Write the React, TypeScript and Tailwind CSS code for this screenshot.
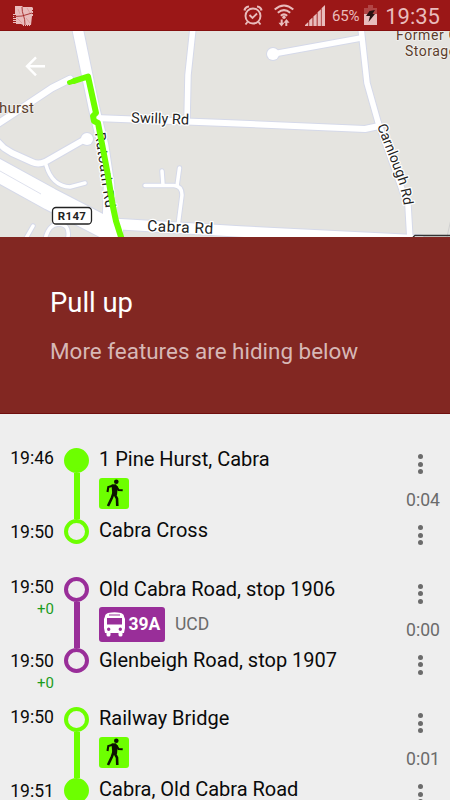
interface Stop {
  time: string
  name: string
  delay?: string
  filled?: boolean
}

interface Leg {
  mode: "walk" | "bus"
  from: Stop
  to: Stop
  duration: string
  route?: string
  headsign?: string
}

const legs: Leg[] = [
  {
    mode: "walk",
    from: { time: "19:46", name: "1 Pine Hurst, Cabra", filled: true },
    to: { time: "19:50", name: "Cabra Cross" },
    duration: "0:04",
  },
  {
    mode: "bus",
    from: { time: "19:50", name: "Old Cabra Road, stop 1906", delay: "+0" },
    to: { time: "19:50", name: "Glenbeigh Road, stop 1907", delay: "+0" },
    duration: "0:00",
    route: "39A",
    headsign: "UCD",
  },
  {
    mode: "walk",
    from: { time: "19:50", name: "Railway Bridge" },
    to: { time: "19:51", name: "Cabra, Old Cabra Road", filled: true },
    duration: "0:01",
  },
]

const roads = [
  { d: "M70 79 L52 88 L28 104 L-4 125", w: 6.5 },
  { d: "M193 28 L188 75 L187 120", w: 5.5 },
  { d: "M95 118 L225 123 L365 129 L379 126", w: 6 },
  { d: "M361 28 L367 83 L378 122 L404 195 L408 205 L410 240", w: 5.5 },
  { d: "M273 54 L361 38", w: 5.5 },
  { d: "M-4 140 L4 148 L12 153 L32 162 Q38 165 45 162 L87 138", w: 6 },
  { d: "M46 165 Q52 186 70 187 L85 183", w: 3.5 },
  { d: "M145 185.5 H174 Q182 186 182 195 L178 226", w: 3.5 },
  { d: "M162 171 L163 185 M179.500 168 L177 186", w: 3.5 },
  { d: "M25 240 L33 226 M45 240 Q48 225 58 224 Q70 224 68 237", w: 3.5 },
  { d: "M77 26 L94 108 L103 145 L109 185 L108 222", w: 10.5 },
  { d: "M-10 166 L50 199 L100 223 L240 231.500 L420 240.500", w: 10.5 },
  { d: "M-10 166 L50 199 L112 231", w: 22 },
]

function StatusBar() {
  return (
    <header className="flex h-[31px] shrink-0 items-center border-b border-[#85100f] bg-[#9b1717] pr-[10px] pl-[12px] text-[#e9bcbc]">
      <svg className="mt-px" width="22" height="22" viewBox="0 0 22 22" fill="none">
        <path
          d="M3 1h7l1 1h9l1 1v2h-1v1h1v2h-1v1h1v2h-1l-1 9h-1v1h-1v-1h-1v1h-1v-1h-1v1h-1v-1h-1v1h-1v-1l-2-1H4v-1H1v-1h3v-1H1v-1h3v-1H1v-1h3v-1H1v-1h3v-1H1v-1h2z"
          fill="#e9bcbc"
        />
        <path d="M2 11.500L10 11l10-3M10 2q0 5 1.500 8.500T13 20" stroke="#9b1717" strokeWidth=".8" />
        <path d="M15 3l3 5M6 4l2 5M14 13l4 5M5 13l5 5" stroke="#cf8585" strokeWidth=".5" />
      </svg>
      <div className="flex-1" />
      <svg className="mr-[11px]" width="20" height="22" viewBox="0 0 20 22" fill="none" stroke="currentColor" strokeWidth="1.9">
        <circle cx="10" cy="12" r="7.500" />
        <path d="M6.500 11l3 3 4.500-4.500M4.500 18l-2 2.500M15.500 18l2 2.500" />
        <path d="M1.500 6.500Q2 3 6 2.500M18.500 6.500Q18 3 14 2.500" strokeWidth="2.200" />
      </svg>
      <svg className="mr-[11px]" width="20" height="23" viewBox="0 0 20 23" fill="none" stroke="currentColor" strokeWidth="2">
        <path d="M.7 5.500Q10-2.500 19.300 5.500M3.800 8.700Q10 3.500 16.200 8.700M6.800 11.700Q10 9 13.200 11.700" />
        <circle cx="10" cy="13.300" r="1.700" fill="currentColor" stroke="none" />
        <path d="M7.700 15.500v5M12.300 22v-5" />
        <path d="M4.500 18.800h6l-3 3.700zM9.500 18.800h6l-3-3.800z" fill="currentColor" stroke="none" />
      </svg>
      <svg className="mr-[7px]" width="20" height="21" viewBox="0 0 20 21" fill="currentColor">
        <path d="M0 21v-1l3.300-3v4zM4.200 21v-5.500l3.300-3V21zM8.400 21v-9.500l3.300-3V21zM12.600 21V7.200l3.300-3V21zM16.600 21V3.300L20 0v21z" />
      </svg>
      <span className="mt-[2px] text-[15px] tracking-[-0.2px]">65%</span>
      <svg className="mr-[8.5px] ml-[4.5px]" width="13" height="20" viewBox="0 0 13 20">
        <path d="M4 0h5v3h4v6H0V3h4z" fill="#b24545" />
        <path d="M0 9h13v11H0z" fill="currentColor" />
        <path d="M5.500 6l5.500-1-2.500 4h2.500l-6.500 8 1.500-6H2z" fill="#271010" />
      </svg>
      <span className="mt-[3px] text-[22px] leading-none">19:35</span>
    </header>
  )
}

function RouteMap() {
  return (
    <div className="h-[206px] shrink-0 overflow-hidden bg-[#e5e4e0]">
      <svg className="block" width="450" height="206" viewBox="0 31 450 206" fill="none">
        <g stroke="#d5d9e9" strokeLinejoin="round" strokeLinecap="round">
          {roads.map((road) => (
            <path key={road.d} d={road.d} strokeWidth={road.w + 2} />
          ))}
          <circle cx="273" cy="54" r="6" strokeWidth="2" />
          <circle cx="87" cy="139" r="6" strokeWidth="2" />
        </g>
        <g stroke="#fff" strokeLinejoin="round" strokeLinecap="round">
          {roads.map((road) => (
            <path key={road.d} d={road.d} strokeWidth={road.w} />
          ))}
        </g>
        <circle cx="273" cy="54" r="6" fill="#fff" />
        <circle cx="87" cy="139" r="6" fill="#fff" />
        <path d="M0 171L41 194" stroke="#d5d9e9" strokeWidth=".8" />
        <path d="M447 237l4-18" stroke="#d0d0d0" />

        <g fontFamily="Roboto, sans-serif" fontSize="14.500" fill="#222" stroke="#fff" strokeWidth="2.500" paintOrder="stroke" strokeLinejoin="round">
          <text transform="translate(131 122.500) rotate(2)" textLength="58">Swilly Rd</text>
          <text transform="translate(147 231) rotate(2.500)" textLength="66" fontSize="15.500">Cabra Rd</text>
          <path id="carnlough" d="M377 126 Q386 149 395 172 Q403 193 404.500 213" stroke="none" fill="none" />
          <text fontSize="14">
            <textPath href="#carnlough" textLength="84">Carnlough Rd</textPath>
          </text>
          <text transform="translate(95 133) rotate(82)" textLength="76">Ratoath Rd</text>
        </g>
        <g fontFamily="Roboto, sans-serif" fontSize="14" fill="#5b3d2c" stroke="#f3f2ef" strokeWidth="1.500" paintOrder="stroke">
          <text x="-1" y="112.500" textLength="35" fontSize="15">hurst</text>
          <text x="396" y="39.500" letterSpacing=".6">Former C</text>
          <text x="405" y="55.500" letterSpacing=".5">Storage</text>
        </g>

        <rect x="52.500" y="207.500" width="39" height="16.500" rx="3.500" fill="#fff" stroke="#222" strokeWidth="1.300" />
        <text x="72" y="220" fontFamily="Roboto, sans-serif" fontSize="11.500" fontWeight="700" letterSpacing=".3" textAnchor="middle" fill="#222">
          R147
        </text>
        <path d="M413 237l2-1.500h36" stroke="#333" strokeWidth="1.500" />

        <path
          d="M74 81 L88 76.500 L96 113 L93 116 L94 121 L98 123 L107 170 L113 207 L116 221 L122 240"
          stroke="#6dff00"
          strokeWidth="6"
          strokeLinecap="round"
          strokeLinejoin="round"
        />
        <path d="M69.500 82.500L76 80.300" stroke="#6dff00" strokeWidth="5" strokeLinecap="round" />
        <path d="M45 66.300H27M36 57.300L27 66.300l9 9" stroke="#fff" strokeWidth="2.400" />
      </svg>
    </div>
  )
}

function WalkBadge() {
  return (
    <div className="flex h-[31px] w-[30px] items-center justify-center rounded-[3px] bg-[#6dff00]">
      <svg width="18" height="28" viewBox="0 0 18 28" fill="none" stroke="#0c1400">
        <circle cx="11.300" cy="2.700" r="2.300" fill="#0c1400" stroke="none" />
        <path d="M6.500 5.500L11 5.300l1.700 2.700-.7 8-4.700-.5z" fill="#0c1400" stroke="none" />
        <path d="M8.500 6.500L3.300 8 2.500 13M11.500 7.500l2 3.500 4.200.3" strokeWidth="2.100" />
        <path d="M8.700 13.500L7 18.500 3 27M9.500 15l2.500 4.500.3 7.500" strokeWidth="2.600" />
      </svg>
    </div>
  )
}

function BusBadge({ route }: { route?: string }) {
  return (
    <div className="flex h-[34.5px] w-[66px] items-center rounded-[3px] bg-[#992e99] pl-[4.5px] text-white">
      <svg width="21" height="25" viewBox="0 0 21 25">
        <path
          fillRule="evenodd"
          fill="currentColor"
          d="M4 1Q10.500-.5 17 1 20 2 20.200 5L21 7v9l-1 5h-1.500v2q0 1.500-2 1.500T14.500 23v-2h-8v2q0 1.500-2 1.500T2.500 23v-2H1L0 16V7L.8 5Q1 2 4 1zM5 2.500v1h11v-1zM3 6v6.500h15V6zM4.700 15.500a1.700 1.700 0 100 3.400 1.700 1.700 0 000-3.400zM16.300 15.500a1.700 1.700 0 100 3.400 1.700 1.700 0 000-3.400z"
        />
      </svg>
      <span className="ml-[4px] text-[17.5px] font-bold">{route}</span>
    </div>
  )
}

function MoreDots() {
  return (
    <div className="mt-[8px] mr-[27.5px] flex flex-col gap-[2.5px]">
      <span className="size-[5px] rounded-full bg-[#6b6b6b]" />
      <span className="size-[5px] rounded-full bg-[#6b6b6b]" />
      <span className="size-[5px] rounded-full bg-[#6b6b6b]" />
    </div>
  )
}

function StopRow({ stop, mode }: { stop: Stop; mode: Leg["mode"] }) {
  const border = mode === "walk" ? "border-[#6dff00]" : "border-[#992e99]"
  return (
    <div className="flex h-[25px] items-center">
      <div className={`h-[25px] w-[25px] shrink-0 rounded-full border-[4.5px] ${border} ${stop.filled ? "bg-[#6dff00]" : ""}`} />
      <span className="ml-[10px] flex-1 pb-px text-[20px] leading-[25px] whitespace-nowrap text-[#0a0a0a]">{stop.name}</span>
      <MoreDots />
    </div>
  )
}

function StopTime({ stop }: { stop: Stop }) {
  return (
    <div className="h-[74px] text-right">
      <div className="text-[17.6px] leading-[21px] text-[#0a0a0a]">{stop.time}</div>
      {stop.delay && <div className="text-[15px] leading-[23px] text-[#1c9c1c]">{stop.delay}</div>}
    </div>
  )
}

function LegItem({ leg }: { leg: Leg }) {
  const line = leg.mode === "walk" ? "bg-[#6dff00]" : "bg-[#992e99]"
  return (
    <li className="flex h-[129.6px] shrink-0">
      <div className="w-[54px] shrink-0">
        <StopTime stop={leg.from} />
        <StopTime stop={leg.to} />
      </div>
      <div className="ml-[10px] flex-1">
        <StopRow stop={leg.from} mode={leg.mode} />
        <div className="flex h-[46px]">
          <div className={`ml-[10px] h-[46px] w-[5.5px] ${line}`} />
          <div className="ml-[19.5px] flex flex-1 items-start pt-[5px]">
            {leg.mode === "walk" ? <WalkBadge /> : <BusBadge route={leg.route} />}
            {leg.headsign && <span className="ml-[10px] text-[17.5px] leading-[35px] text-[#6b6b6b]">{leg.headsign}</span>}
          </div>
          <span className="mt-[16.5px] mr-[10px] text-[17.6px] leading-[22px] text-[#6b6b6b]">{leg.duration}</span>
        </div>
        <StopRow stop={leg.to} mode={leg.mode} />
      </div>
    </li>
  )
}

export default function App() {
  return (
    <div className="flex h-[800px] w-[450px] flex-col overflow-hidden bg-[#eeeeee] font-['Roboto',sans-serif]">
      <StatusBar />
      <RouteMap />
      <section className="h-[177px] shrink-0 border-b border-[#6f0f0e] bg-[#822722] pt-[48px] pl-[50px]">
        <h1 className="text-[27.4px] leading-[36px] text-white">Pull up</h1>
        <p className="mt-[15px] text-[22.45px] leading-[30px] text-[#d7b8b6]">More features are hiding below</p>
      </section>
      <ul className="flex flex-col pt-[33.5px]">
        {legs.map((leg) => (
          <LegItem key={leg.from.name} leg={leg} />
        ))}
      </ul>
    </div>
  )
}
